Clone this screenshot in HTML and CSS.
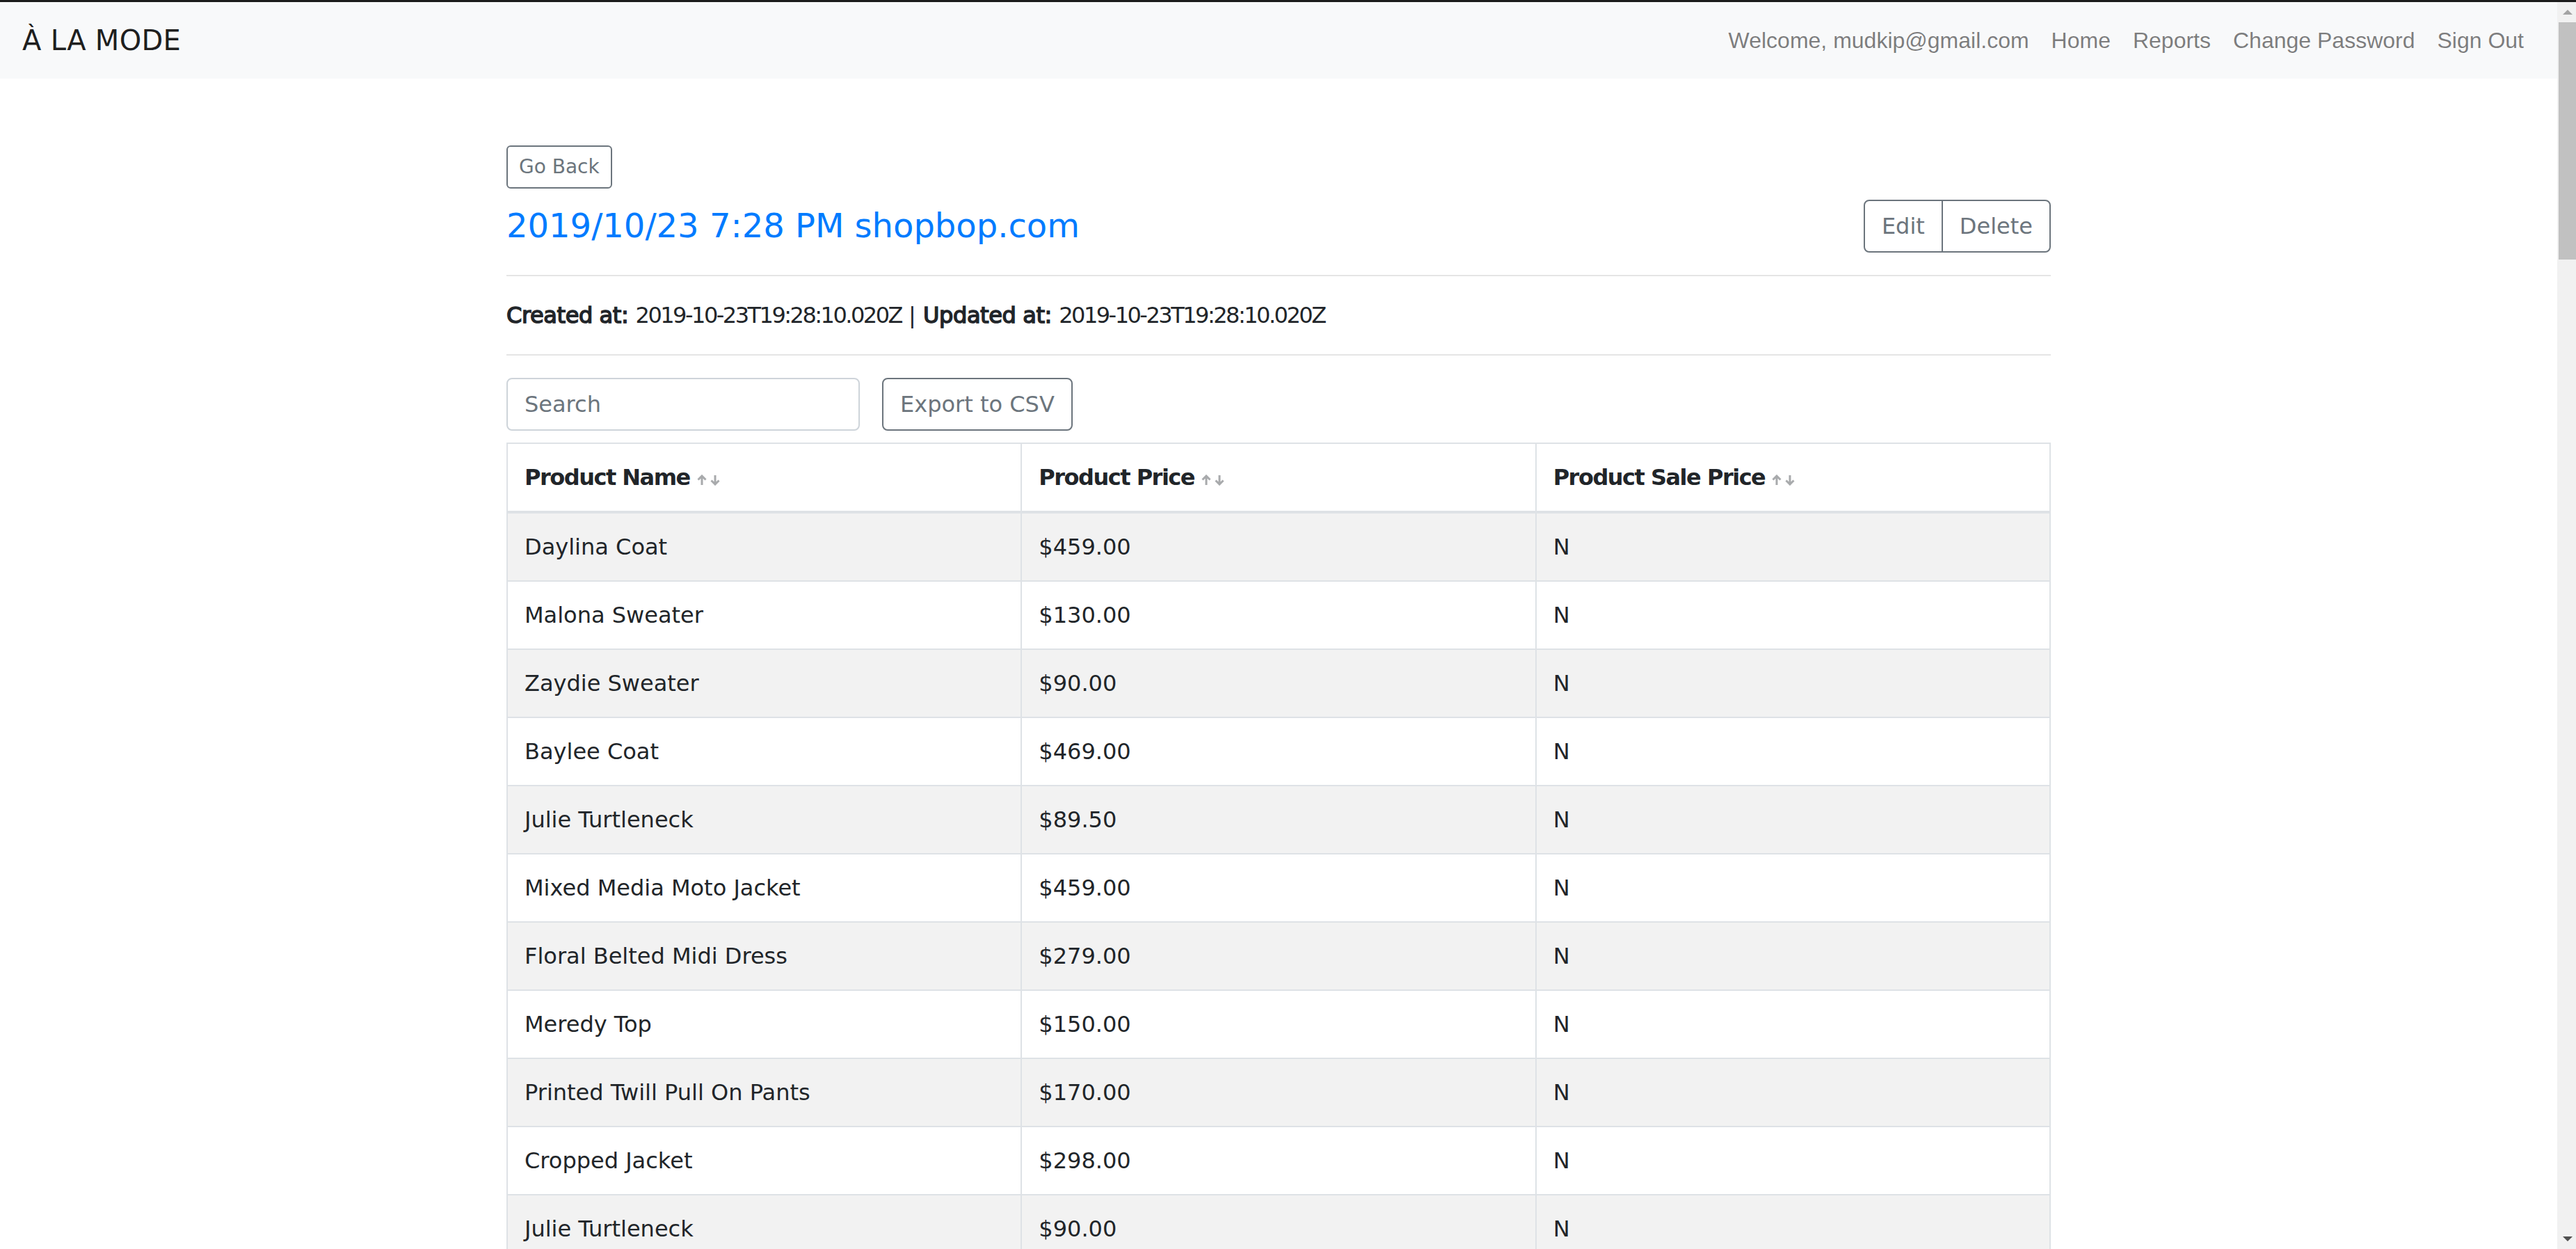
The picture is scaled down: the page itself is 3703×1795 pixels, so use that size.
FILE: index.html
```html
<!DOCTYPE html>
<html lang="en">
<head>
<meta charset="utf-8">
<title>À LA MODE</title>
<link rel="stylesheet" href="styles.css">
</head>
<body>
<div class="strip"></div>
<div class="frame">
  <div class="page">
    <nav class="navbar">
      <a class="brand">À LA MODE</a>
      <div class="nav">
        <span class="nav-item">Welcome, mudkip@gmail.com</span>
        <a class="nav-item">Home</a>
        <a class="nav-item">Reports</a>
        <a class="nav-item">Change Password</a>
        <a class="nav-item">Sign Out</a>
      </div>
    </nav>
    <main class="container">
      <div class="back-row"><button class="btn btn-sm">Go Back</button></div>
      <div class="title-row">
        <h4 class="title">2019/10/23 7:28 PM shopbop.com</h4>
        <div class="btn-group">
          <button class="btn">Edit</button>
          <button class="btn">Delete</button>
        </div>
      </div>
      <hr class="rule">
      <p class="meta"><b>Created at:</b> <span class="stamp">2019-10-23T19:28:10.020Z</span> | <b>Updated at:</b> <span class="stamp">2019-10-23T19:28:10.020Z</span></p>
      <hr class="rule">
      <div class="tools">
        <input class="search" type="text" placeholder="Search">
        <button class="btn export">Export to CSV</button>
      </div>
      <table class="grid">
        <thead>
          <tr>
            <th>Product Name<span class="sort"><svg viewBox="0 0 14 16" width="14" height="16"><path d="M7 15V2M1.5 7.5L7 2l5.5 5.5"/></svg><svg viewBox="0 0 14 16" width="14" height="16"><path d="M7 1v13M1.5 8.5L7 14l5.5-5.5"/></svg></span></th>
            <th>Product Price<span class="sort"><svg viewBox="0 0 14 16" width="14" height="16"><path d="M7 15V2M1.5 7.5L7 2l5.5 5.5"/></svg><svg viewBox="0 0 14 16" width="14" height="16"><path d="M7 1v13M1.5 8.5L7 14l5.5-5.5"/></svg></span></th>
            <th>Product Sale Price<span class="sort"><svg viewBox="0 0 14 16" width="14" height="16"><path d="M7 15V2M1.5 7.5L7 2l5.5 5.5"/></svg><svg viewBox="0 0 14 16" width="14" height="16"><path d="M7 1v13M1.5 8.5L7 14l5.5-5.5"/></svg></span></th>
          </tr>
        </thead>
        <tbody>
          <tr><td>Daylina Coat</td><td>$459.00</td><td>N</td></tr>
          <tr><td>Malona Sweater</td><td>$130.00</td><td>N</td></tr>
          <tr><td>Zaydie Sweater</td><td>$90.00</td><td>N</td></tr>
          <tr><td>Baylee Coat</td><td>$469.00</td><td>N</td></tr>
          <tr><td>Julie Turtleneck</td><td>$89.50</td><td>N</td></tr>
          <tr><td>Mixed Media Moto Jacket</td><td>$459.00</td><td>N</td></tr>
          <tr><td>Floral Belted Midi Dress</td><td>$279.00</td><td>N</td></tr>
          <tr><td>Meredy Top</td><td>$150.00</td><td>N</td></tr>
          <tr><td>Printed Twill Pull On Pants</td><td>$170.00</td><td>N</td></tr>
          <tr><td>Cropped Jacket</td><td>$298.00</td><td>N</td></tr>
          <tr><td>Julie Turtleneck</td><td>$90.00</td><td>N</td></tr>
        </tbody>
      </table>
    </main>
  </div>
  <div class="scrollbar">
    <div class="sb-btn"><span class="tri-up"></span></div>
    <div class="sb-thumb"></div>
    <div class="sb-track"></div>
    <div class="sb-btn sb-bottom"><span class="tri-down"></span></div>
  </div>
</div>
</body>
</html>
```

FILE: styles.css
```css
* { box-sizing: border-box; }
html, body { margin: 0; height: 100%; overflow: hidden; }
body {
  font-family: "DejaVu Sans", sans-serif;
  font-size: 32px;
  line-height: 1.5;
  color: #212529;
  background: #fff;
  display: flex;
  flex-direction: column;
}
.strip { height: 3px; background: #1c1c1c; flex: none; }
.frame { flex: 1; display: flex; min-height: 0; }
.page { flex: 1; min-width: 0; overflow: hidden; }

.navbar {
  background: #f8f9fa;
  display: flex;
  align-items: center;
  justify-content: space-between;
  padding: 16px 32px;
  height: 110px;
}
.brand {
  font-size: 40px;
  line-height: 58px;
  font-weight: 400;
  color: rgba(0,0,0,.9);
  letter-spacing: 0.3px;
}
.nav {
  display: flex;
  font-family: "Liberation Sans", Arial, sans-serif;
  font-size: 32px;
  line-height: 48px;
  color: rgba(0,0,0,.5);
}
.nav-item { padding: 16px; }

.container { width: 2220px; margin: 96px auto 0; }

.btn {
  font-family: inherit;
  font-size: 32px;
  line-height: 48px;
  padding: 12px 24px;
  border: 2px solid #6c757d;
  border-radius: 8px;
  background: #fff;
  color: #6c757d;
  cursor: pointer;
}
.btn-sm {
  font-size: 28px;
  line-height: 42px;
  padding: 8px 16px;
  border-radius: 6px;
}
.back-row { display: flex; }
.title-row {
  margin-top: 16px;
  display: flex;
  align-items: center;
  justify-content: space-between;
}
.title {
  margin: 0;
  font-size: 48px;
  line-height: 57.6px;
  font-weight: 400;
  color: #007bff;
}
.btn-group { display: flex; }
.btn-group .btn:first-child { border-top-right-radius: 0; border-bottom-right-radius: 0; }
.btn-group .btn + .btn { margin-left: -2px; border-top-left-radius: 0; border-bottom-left-radius: 0; }

.rule { margin: 32px 0; border: 0; border-top: 2px solid rgba(0,0,0,.1); height: 0; }
.meta { margin: 0; line-height: 48px; }
.meta b { font-weight: 400; -webkit-text-stroke: 1.5px #212529; letter-spacing: -0.4px; }
.stamp { letter-spacing: -2.5px; }

.tools { display: flex; align-items: center; margin-bottom: 17px; }
.search {
  width: 508px;
  height: 76px;
  font-family: inherit;
  font-size: 32px;
  padding: 12px 24px;
  border: 2px solid #ced4da;
  border-radius: 8px;
  color: #495057;
}
.search::placeholder { color: #6c757d; }
.export { margin-left: 32px; }

.grid {
  width: 100%;
  border-collapse: collapse;
  table-layout: fixed;
}
.grid th, .grid td {
  border: 2px solid #dee2e6;
  padding: 24px;
  line-height: 48px;
  text-align: left;
}
.grid th {
  font-weight: 700;
  letter-spacing: -1.5px;
  vertical-align: bottom;
  border-bottom-width: 4px;
}
.grid td { vertical-align: top; }
.grid tbody tr:nth-child(odd) { background: #f2f2f2; }
.sort { display: inline-flex; gap: 5px; margin-left: 10px; vertical-align: -1px; }
.sort svg { fill: none; stroke: #a8aaac; stroke-width: 3; }

.scrollbar {
  width: 27px;
  flex: none;
  background: #f1f1f1;
  display: flex;
  flex-direction: column;
}
.sb-btn { height: 29px; display: flex; justify-content: center; align-items: center; }
.sb-bottom { height: 26px; align-items: flex-start; padding-top: 8px; }
.sb-thumb { height: 341px; margin-left: 2px; background: #c1c1c1; }
.sb-track { flex: 1; }
.tri-up {
  width: 0; height: 0;
  border-left: 7px solid transparent;
  border-right: 7px solid transparent;
  border-bottom: 7px solid #a3a3a3;
  margin-left: 2px;
}
.tri-down {
  width: 0; height: 0;
  border-left: 7px solid transparent;
  border-right: 7px solid transparent;
  border-top: 7px solid #505050;
  margin-left: 2px;
}
```
